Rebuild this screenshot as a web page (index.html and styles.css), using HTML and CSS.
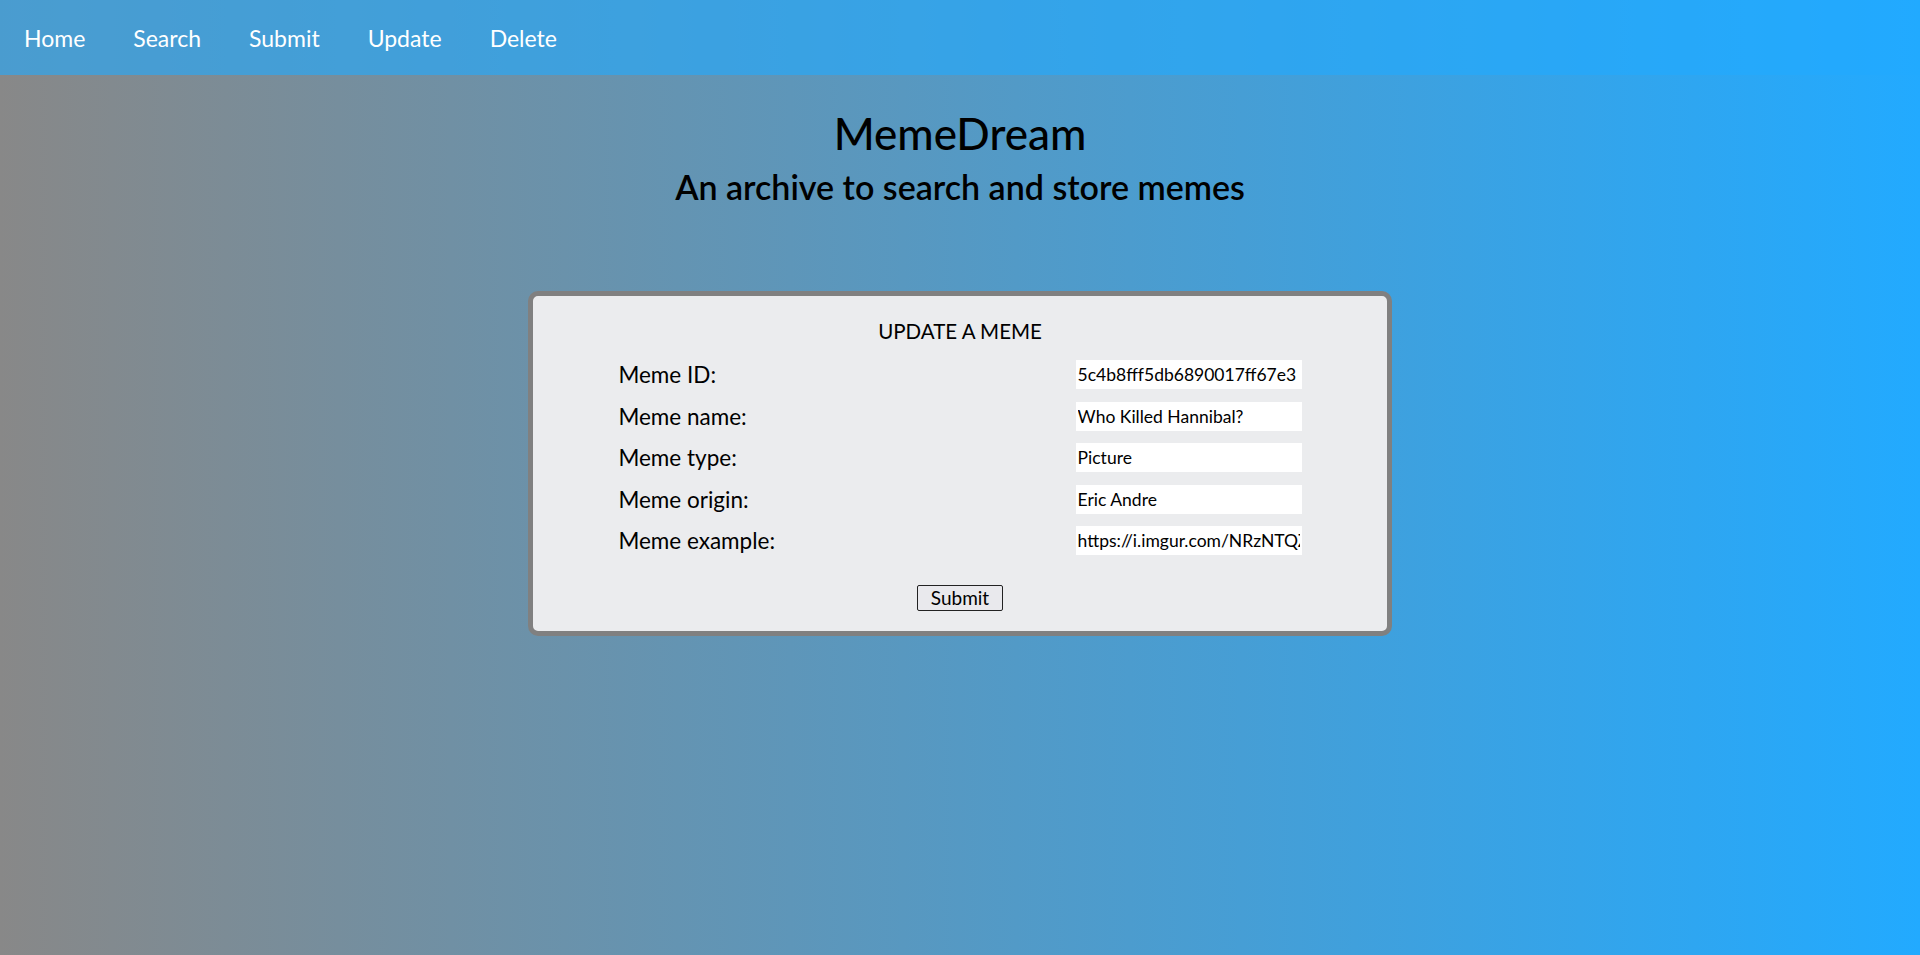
FILE: index.html
```html
<!DOCTYPE html>
<html lang="en">
<head>
<meta charset="utf-8">
<title>MemeDream - Update</title>
<link rel="stylesheet" href="styles.css">
</head>
<body>
<nav class="nav">
  <a class="nav-link" href="#">Home</a>
  <a class="nav-link" href="#">Search</a>
  <a class="nav-link" href="#">Submit</a>
  <a class="nav-link" href="#">Update</a>
  <a class="nav-link" href="#">Delete</a>
</nav>
<header class="header">
  <h1 class="title">MemeDream</h1>
  <h2 class="subtitle">An archive to search and store memes</h2>
</header>
<main class="card">
  <div class="card-title">UPDATE A MEME</div>
  <form class="form">
    <div class="row"><label class="label">Meme ID:</label><input class="field" type="text" value="5c4b8fff5db6890017ff67e3"></div>
    <div class="row"><label class="label">Meme name:</label><input class="field" type="text" value="Who Killed Hannibal?"></div>
    <div class="row"><label class="label">Meme type:</label><input class="field" type="text" value="Picture"></div>
    <div class="row"><label class="label">Meme origin:</label><input class="field" type="text" value="Eric Andre"></div>
    <div class="row"><label class="label">Meme example:</label><input class="field" type="text" value="https://i.imgur.com/NRzNTQZ.jpg"></div>
    <div class="actions"><button class="btn" type="button">Submit</button></div>
  </form>
</main>
</body>
</html>
```

FILE: styles.css
```css
* { box-sizing: border-box; }
html, body { margin: 0; padding: 0; }
body {
  min-height: 955px;
  background: linear-gradient(to right, #888888, #22aaff);
  font-family: Lato, "Liberation Sans", sans-serif;
  color: #000;
}
.nav {
  height: 75px;
  display: flex;
  align-items: center;
  background: rgba(34, 170, 255, 0.6);
}
.nav-link {
  color: #fff;
  text-decoration: none;
  font-size: 23px;
  padding: 0 24px;
  line-height: 30px;
}
.header {
  text-align: center;
  padding-top: 30px;
}
.title {
  margin: 0;
  font-size: 44px;
  font-weight: 500;
  line-height: 56px;
}
.subtitle {
  margin: 0;
  font-size: 34px;
  font-weight: 600;
  line-height: 44px;
  padding-top: 4px;
}
.card {
  width: 45%;
  margin: 82px auto 0;
  background: #ebecee;
  border: 5px solid #808080;
  border-radius: 10px;
  padding: 23px 0 20px;
}
.card-title {
  text-align: center;
  font-size: 20.5px;
  line-height: 24px;
  margin-bottom: 17px;
}
.form {
  width: 80%;
  margin: 0 auto;
  display: flex;
  flex-direction: column;
  gap: 12.6px;
}
.row {
  display: flex;
  justify-content: space-between;
  align-items: center;
  height: 29px;
}
.label {
  font-size: 22.5px;
  line-height: 29px;
}
.field {
  width: 226px;
  height: 29px;
  border: none;
  background: #fff;
  padding: 0 2px;
  font-family: Lato, "Liberation Sans", sans-serif;
  font-size: 17.5px;
  color: #000;
  outline: none;
}
.actions {
  display: flex;
  justify-content: center;
  margin-top: 17px;
}
.btn {
  font-family: Lato, "Liberation Sans", sans-serif;
  font-size: 19px;
  height: 26px;
  width: 86px;
  padding: 0;
  background: #e9e9ed;
  border: 1px solid #222;
  border-radius: 2px;
  color: #000;
  line-height: 22px;
}
```
